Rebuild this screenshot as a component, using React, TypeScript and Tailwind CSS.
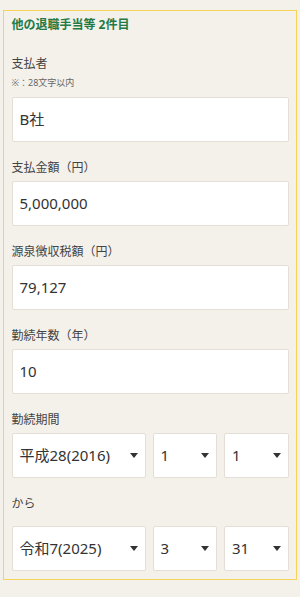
import React from 'react';

const font = { fontFamily: '"Noto Sans", "Noto Sans CJK JP", sans-serif' };

function Label({ children, className = '' }: { children: React.ReactNode; className?: string }) {
  return <p className={`text-[12px] leading-[20px] text-[#444] ${className}`}>{children}</p>;
}

function TextBox({ value }: { value: string }) {
  return (
    <div className="flex h-[45px] items-center rounded-[2px] border border-[#e4dfd6] bg-white px-[7px] text-[15px] text-[#333]">
      {value}
    </div>
  );
}

function SelectBox({ value }: { value: string }) {
  return (
    <div className="flex h-[45px] items-center justify-between rounded-[2px] border border-[#e4dfd6] bg-white pl-[7px] pr-[7px] text-[15px] text-[#333]">
      <span>{value}</span>
      <svg width="8" height="5" viewBox="0 0 8 5" className="shrink-0">
        <path d="M0 0 H8 L4 5 Z" fill="#333" />
      </svg>
    </div>
  );
}

function DateRow({ era, month, day }: { era: string; month: string; day: string }) {
  return (
    <div className="grid grid-cols-[134px_1fr_1fr] gap-[7px]">
      <SelectBox value={era} />
      <SelectBox value={month} />
      <SelectBox value={day} />
    </div>
  );
}

export default function App() {
  return (
    <div className="min-h-[597px] w-[300px] bg-[#f4f1ea] pt-[10px]" style={font}>
      <div className="mx-[3px] border-[1.5px] border-[#f8d35a] px-[7.5px] pb-[8px] pt-[5px]">
        <h2 className="text-[12px] font-bold leading-[18px] text-[#237a46]">他の退職手当等 2件目</h2>

        <Label className="mt-[20px]">支払者</Label>
        <p className="mt-[1.5px] text-[9px] leading-[14px] text-[#666]">※：28文字以内</p>
        <div className="mt-[7px]">
          <TextBox value="B社" />
        </div>

        <Label className="mt-[16px] mb-[3px]">支払金額（円）</Label>
        <TextBox value="5,000,000" />

        <Label className="mt-[16px] mb-[3px]">源泉徴収税額（円）</Label>
        <TextBox value="79,127" />

        <Label className="mt-[16px] mb-[3px]">勤続年数（年）</Label>
        <TextBox value="10" />

        <Label className="mt-[16px] mb-[3px]">勤続期間</Label>
        <DateRow era="平成28(2016)" month="1" day="1" />

        <Label className="mt-[16px] mb-[12px]">から</Label>
        <DateRow era="令和7(2025)" month="3" day="31" />
      </div>
    </div>
  );
}
